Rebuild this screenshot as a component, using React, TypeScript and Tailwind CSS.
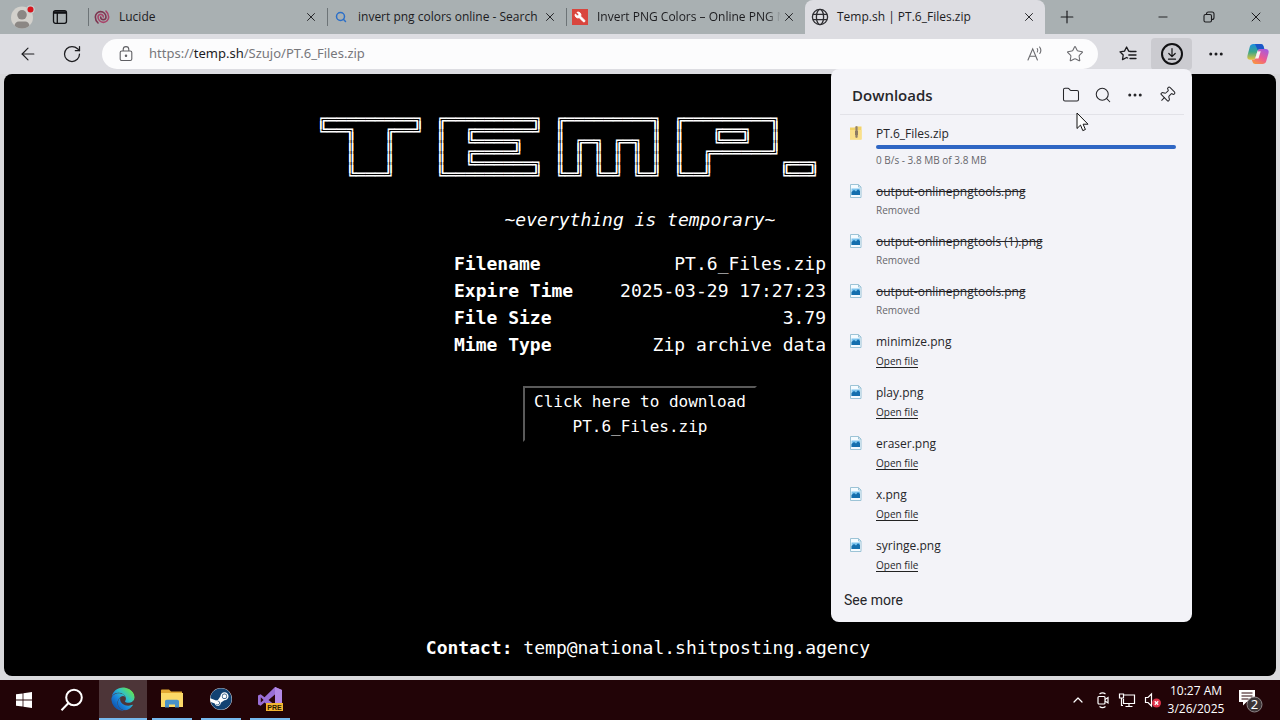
import React from "react";
import {
  ArrowLeft,
  RotateCw,
  Star,
  Folder,
  Search,
  Pin,
  Plus,
  X,
  Minus,
  Wrench,
  ChevronUp,
  Ellipsis,
} from "lucide-react";
import { FaEdge, FaSteam } from "react-icons/fa";

const letterT = [
  "╔═════════╗",
  "╚══╗   ╔══╝",
  "   ║   ║   ",
  "   ║   ║   ",
  "   ║   ║   ",
  "   ╚═══╝   ",
].join("\n");

const letterE = [
  "╔═════════╗",
  "║  ╔══════╝",
  "║  ╚════╗  ",
  "║  ╔════╝  ",
  "║  ╚══════╗",
  "╚═════════╝",
].join("\n");

const letterM = [
  "╔═════════╗",
  "║         ║",
  "║ ╔═╗ ╔═╗ ║",
  "║ ║ ║ ║ ║ ║",
  "║ ║ ║ ║ ║ ║",
  "╚═╝ ╚═╝ ╚═╝",
].join("\n");

const letterP = [
  "╔═════════╗    ",
  "║   ╔══╗  ║    ",
  "║   ╚══╝  ║    ",
  "║  ╔══════╝    ",
  "║  ║       ╔══╗",
  "╚══╝       ╚══╝",
].join("\n");

const banner = [letterT, letterE, letterM, letterP];

const fileInfo = [
  { label: "Filename", value: "PT.6_Files.zip" },
  { label: "Expire Time", value: "2025-03-29 17:27:23" },
  { label: "File Size", value: "3.79" },
  { label: "Mime Type", value: "Zip archive data" },
];

type Download = { name: string; state: "removed" | "done" };

const downloads: Download[] = [
  { name: "output-onlinepngtools.png", state: "removed" },
  { name: "output-onlinepngtools (1).png", state: "removed" },
  { name: "output-onlinepngtools.png", state: "removed" },
  { name: "minimize.png", state: "done" },
  { name: "play.png", state: "done" },
  { name: "eraser.png", state: "done" },
  { name: "x.png", state: "done" },
  { name: "syringe.png", state: "done" },
];

function LucideMark() {
  return (
    <svg viewBox="0 0 24 24" className="size-4" fill="none" strokeWidth="2.4" strokeLinecap="round">
      <path stroke="#a8446a" d="M14 12a4 4 0 0 0-8 0 8 8 0 1 0 16 0 11.97 11.97 0 0 0-4-8.944" />
      <path stroke="#7d3550" d="M10 12a4 4 0 0 0 8 0 8 8 0 1 0-16 0 11.97 11.97 0 0 0 4.063 9" />
    </svg>
  );
}

function WrenchMark() {
  return (
    <span className="flex size-4 items-center justify-center bg-[#d9453d]">
      <Wrench className="size-3 -scale-x-100 text-white" fill="white" strokeWidth={1.5} />
    </span>
  );
}

function GlobeMark() {
  return (
    <svg viewBox="0 0 18 18" className="size-[18px]" fill="none" stroke="#2c2c30" strokeWidth="1.3">
      <circle cx="9" cy="9" r="7.6" />
      <ellipse cx="9" cy="9" rx="3.6" ry="7.6" />
      <path d="M2 6.3h14M2 11.7h14" />
    </svg>
  );
}

function ProfileMark() {
  return (
    <svg viewBox="0 0 24 24" className="size-6">
      <defs>
        <clipPath id="avatar">
          <circle cx="11" cy="12.5" r="11" />
        </clipPath>
      </defs>
      <circle cx="11" cy="12.5" r="11" fill="#d3d1cc" />
      <g clipPath="url(#avatar)" fill="#8b8784">
        <circle cx="11" cy="9.8" r="4.8" />
        <path d="M3.6 24v-3.4c0-2.500 2-4.200 4.200-4.200h6.400c2.300 0 4.200 1.700 4.200 4.200V24z" />
      </g>
      <circle cx="19.500" cy="4.500" r="4.300" fill="#c9cccc" />
      <circle cx="19.500" cy="4.500" r="3" fill="#d8141c" />
    </svg>
  );
}

function TabActionsMark() {
  return (
    <svg viewBox="0 0 16 16" className="size-4" fill="none" stroke="#101114" strokeWidth="1.300">
      <rect x="1.500" y="1.700" width="13" height="12.600" rx="2" />
      <path d="M2 3.500h12" strokeWidth="2.600" />
      <path d="M5.300 4v10" />
    </svg>
  );
}

function LockMark() {
  return (
    <svg viewBox="0 0 16 18" className="h-[18px] w-4" fill="none" stroke="#5f5f63" strokeWidth="1.100">
      <rect x="2.200" y="6" width="11.600" height="9.500" rx="1.600" />
      <path d="M5.200 6V4.400a2.800 2.800 0 0 1 5.600 0V6" />
      <circle cx="8" cy="10.700" r="0.700" fill="#5f5f63" />
    </svg>
  );
}

function ReadAloudMark() {
  return (
    <svg viewBox="0 0 18 18" className="size-[18px]" fill="none" stroke="#6a6a6e" strokeWidth="1.100" strokeLinecap="round">
      <path d="M2 15 6.700 3.800 11.400 15M3.700 11.300h6" />
      <path d="M11.200 3.500c.8 1.100.8 2.500.1 3.500M13.600 2c1.500 2 1.500 4.600.2 6.500" />
    </svg>
  );
}

function FavoritesMark() {
  return (
    <svg viewBox="0 0 18 18" className="size-[18px]" fill="none" stroke="#1b1b1e" strokeWidth="1.300" strokeLinecap="round" strokeLinejoin="round">
      <path d="M11 6.300 9.700 6.100 7.600 2 5.500 6.100 1 6.800l3.200 3.200-.7 4.600 4.100-2.100 1 .5" />
      <path d="M11 6.500h6M9.800 10h7.200M11 13.500h6" />
    </svg>
  );
}

function DownloadMark() {
  return (
    <svg viewBox="0 0 24 24" className="size-6" fill="none" stroke="#111113" strokeLinecap="round" strokeLinejoin="round">
      <circle cx="12" cy="12" r="10" strokeWidth="2" />
      <path strokeWidth="1.200" d="M12 6.500v8M8.800 11.500l3.200 3.200 3.200-3.200M8.500 17.200h7" />
    </svg>
  );
}

function CopilotMark() {
  return (
    <svg viewBox="0 0 24 24" className="size-6">
      <defs>
        <linearGradient id="cpLeft" x1="0" y1="0" x2="0" y2="1">
          <stop offset="0" stopColor="#1b8fe0" />
          <stop offset="0.500" stopColor="#3aa68a" />
          <stop offset="1" stopColor="#e8c53a" />
        </linearGradient>
        <linearGradient id="cpRight" x1="0.800" y1="0" x2="0.200" y2="1">
          <stop offset="0" stopColor="#a45be0" />
          <stop offset="0.550" stopColor="#ee5a8f" />
          <stop offset="1" stopColor="#f9953f" />
        </linearGradient>
      </defs>
      <path d="M7.500 2h7.300c1.300 0 2.200.8 2.600 2l.9 3H14c-1.300 0-2.200.8-2.600 2l-2 6.800c-.4 1.300-1.300 2-2.600 2H4.500C1.800 17.800.8 16 1.500 13.400l2.300-8.600C4.300 3 5.600 2 7.500 2z" fill="url(#cpLeft)" />
      <path d="M16.500 22H9.200c-1.300 0-2.200-.8-2.600-2l-.8-2.200h1.400c1.300 0 2.200-.8 2.600-2l2.200-7c.4-1.200 1.100-1.800 2.400-1.800h5.100c2.700 0 3.700 1.800 3 4.300l-2.300 7.900c-.5 1.800-1.800 2.800-3.700 2.800z" fill="url(#cpRight)" />
      <path d="M9 2h5.800c1.300 0 2.200.8 2.600 2l.9 3H14c-1 0-1.700.4-2.200 1.200z" fill="#1c56c8" />
      <path d="M11.400 9.500 9.200 16.500l3.300-.1 2.200-7.200z" fill="#f7f1f2" />
    </svg>
  );
}

function ZipMark() {
  return (
    <svg viewBox="0 0 16 16" className="size-4">
      <path d="M2 2.500h4.500L8 1.500h5.500v13H2z" fill="#f3d367" />
      <path d="M2 5h11.500v9.500H2z" fill="#fae08a" />
      <path d="M7 1.500h3v11H7z" fill="#b5a078" />
      <path d="M8.500 1.500v11" stroke="#6f6350" strokeWidth="1" strokeDasharray="1 1" />
      <rect x="7" y="6" width="3" height="4" fill="#8d7b62" />
    </svg>
  );
}

function PictureMark() {
  return (
    <svg viewBox="0 0 16 16" className="size-4">
      <path d="M2.500 1.500h8l2.500 2.500v10.500H2.500z" fill="#f5fbff" stroke="#9cc3d6" strokeWidth="1" />
      <path d="M10.500 1.500V4H13" fill="none" stroke="#9cc3d6" />
      <rect x="3.500" y="5.500" width="8.500" height="6.500" fill="#7cc4ee" />
      <path d="M3.500 12V9l2.500-2 2 1.500 2-2.300 2 1.800V12z" fill="#156fae" />
    </svg>
  );
}

function CursorMark() {
  return (
    <svg viewBox="0 0 13 20" className="h-5 w-[13px]">
      <path d="M1 1v15.500l3.500-3.400 2.300 5.500 2.600-1.100-2.300-5.300H12z" fill="#fff" stroke="#111" strokeWidth="1" />
    </svg>
  );
}

function WindowsMark() {
  return (
    <svg viewBox="0 0 16 16" className="size-4" fill="#fff">
      <path d="M0 2.300 6.600 1.400v6.200H0zM7.400 1.300 16 0v7.600H7.400zM0 8.400h6.600v6.200L0 13.700zM7.400 8.400H16V16l-8.600-1.300z" />
    </svg>
  );
}

function TaskSearchMark() {
  return (
    <svg viewBox="0 0 24 24" className="size-6" fill="none" stroke="#fff" strokeWidth="2">
      <circle cx="14" cy="9.500" r="7.800" />
      <path d="M8.500 15 1.500 22.300" />
    </svg>
  );
}

function EdgeMark() {
  return (
    <span className="relative flex">
      <svg className="absolute size-0" aria-hidden="true">
        <defs>
          <linearGradient id="edge" x1="0.900" y1="0.200" x2="0.200" y2="0.900">
            <stop offset="0" stopColor="#5fe05a" />
            <stop offset="0.350" stopColor="#2fc0c8" />
            <stop offset="0.650" stopColor="#1b86dc" />
            <stop offset="1" stopColor="#0f57b0" />
          </linearGradient>
        </defs>
      </svg>
      <FaEdge className="size-6 rounded-full" fill="url(#edge)" />
    </span>
  );
}

function ExplorerMark() {
  return (
    <svg viewBox="0 0 24 22" className="h-[22px] w-6">
      <path d="M1 2.500C1 2 1.400 1.500 2 1.500h7l2 2h11v5H1z" fill="#e2a832" />
      <path d="M1 5h22v14H1z" fill="#fbd968" />
      <path d="M5 19.500v-6c0-1 .7-1.800 1.800-1.800h10.400c1.100 0 1.800.8 1.800 1.800v6h-4v-3H9v3z" fill="#4a92c9" />
    </svg>
  );
}

function SteamMark() {
  return (
    <span className="flex rounded-full bg-white">
      <FaSteam className="size-[22px]" color="#124272" />
    </span>
  );
}

function VisualStudioMark() {
  return (
    <svg viewBox="0 0 26 24" className="h-6 w-[26px]">
      <path d="M18 0 7.500 10.300 3.600 7.300 1 8.500v9l2.600 1.200L7.500 15.600 18 24l7-3V3z" fill="#9a6fd6" />
      <path d="M3.800 10.300v5.300L6.600 13zM18.500 7l-7 6 7 5.500z" fill="#2a0508" />
      <path d="M18 0l7 3v18l-7 3z" fill="#b48ae6" />
      <rect x="9" y="16" width="17" height="8" fill="#f2b632" />
      <text x="17.500" y="22.700" textAnchor="middle" fontSize="7" fontWeight="700" fontFamily="Liberation Sans, sans-serif" fill="#2b1a00">
        PRE
      </text>
    </svg>
  );
}

function MeetMark() {
  return (
    <svg viewBox="0 0 14 18" className="h-[18px] w-3.5" fill="none" stroke="#fff" strokeWidth="1.200">
      <rect x="2" y="5.500" width="7" height="7.500" rx="1" />
      <path d="M9 8.500 12 6.500v5.500L9 10M3.500 3c1.800-1.300 4.200-1.300 6 0M3.500 15.500c1.800 1.300 4.200 1.300 6 0" />
    </svg>
  );
}

function NetworkMark() {
  return (
    <svg viewBox="0 0 18 16" className="h-4 w-[18px]" fill="none" stroke="#fff" strokeWidth="1.200">
      <path d="M6 3h10.500v8.500h-11V7" />
      <path d="M1.500 2h4v4h-4zM3.500 6v7.500h1.500M11 11.500v2.500M7.500 14.500h7" />
    </svg>
  );
}

function MutedMark() {
  return (
    <svg viewBox="0 0 18 16" className="h-4 w-[18px]">
      <path d="M1.500 5.500h2.500L7.500 2v12L4 10.500H1.500z" fill="none" stroke="#fff" strokeWidth="1.200" />
      <circle cx="12.500" cy="11" r="4.500" fill="#e0324a" />
      <path d="m10.800 9.300 3.400 3.400m0-3.400-3.400 3.400" stroke="#fff" strokeWidth="1.300" />
    </svg>
  );
}

function NotificationMark() {
  return (
    <svg viewBox="0 0 26 26" className="size-[26px]">
      <path d="M2 3h16v12H9.500L6 18.500V15H2z" fill="#fff" />
      <path d="M4.500 6h11M4.500 9h11M4.500 12h7" stroke="#2a0508" strokeWidth="1.200" />
      <circle cx="17.500" cy="17.500" r="7.500" fill="#3b3436" stroke="#8d8587" strokeWidth="1" />
      <text x="17.500" y="22" textAnchor="middle" fontSize="13" fontFamily="Noto Sans, sans-serif" fill="#fff">
        2
      </text>
    </svg>
  );
}

function Tab({ icon, title, active, fade }: { icon: React.ReactNode; title: string; active?: boolean; fade?: boolean }) {
  return (
    <div
      role="tab"
      aria-selected={!!active}
      className={
        active
          ? "flex h-[34px] w-60 shrink items-center rounded-t-lg bg-[#dddde2] pr-2 pl-1.5"
          : "flex h-[34px] w-[239px] shrink items-center pr-2"
      }
    >
      {!active && <span className="h-[18px] w-px bg-[#6d7477]" />}
      <span className={active ? "flex w-[18px] justify-center" : "ml-1 flex w-[18px] justify-center"}>{icon}</span>
      <span
        className={
          fade
            ? "ml-2 min-w-0 flex-1 text-xs whitespace-nowrap [mask-image:linear-gradient(to_right,black_92%,transparent)]"
            : "ml-2 min-w-0 flex-1 text-xs whitespace-nowrap"
        }
      >
        {title}
      </span>
      <button aria-label={`Close ${title}`} className="flex size-4 shrink-0 items-center justify-center">
        <X className="size-3.5" strokeWidth={1.6} />
      </button>
    </div>
  );
}

function DownloadRow({ name, state }: Download) {
  return (
    <li className="flex gap-3 pt-2.5 pb-1">
      <span>
        <PictureMark />
      </span>
      <div className="flex flex-col items-start">
        {state === "removed" ? (
          <>
            <span className="text-xs leading-[18px] line-through">{name}</span>
            <span className="text-[10px] leading-[18px] text-[#66666b]">Removed</span>
          </>
        ) : (
          <>
            <span className="text-xs leading-[18px]">{name}</span>
            <a href="#open" className="mt-1 mb-0.5 border-b border-[#222] text-[10px] leading-3">
              Open file
            </a>
          </>
        )}
      </div>
    </li>
  );
}

function DownloadsPanel() {
  return (
    <section
      aria-label="Downloads"
      className="absolute top-[69px] right-[88px] w-[361px] rounded-lg bg-[#f3f3f8] pr-2 pl-[9px] text-[#26262a] shadow-md"
    >
      <header className="flex h-[46px] items-center border-b border-[#e2e2e8] pt-1.5 pr-2 pl-3">
        <h2 className="flex-1 text-[15px] leading-6 font-semibold">Downloads</h2>
        <div className="flex items-center gap-3.5">
          <button aria-label="Open downloads folder">
            <Folder className="size-[18px]" strokeWidth={1.4} />
          </button>
          <button aria-label="Search downloads">
            <Search className="size-[18px]" strokeWidth={1.4} />
          </button>
          <button aria-label="More options">
            <Ellipsis className="size-[18px]" strokeWidth={2} />
          </button>
          <button aria-label="Pin downloads">
            <Pin className="size-[18px] rotate-45" strokeWidth={1.4} />
          </button>
        </div>
      </header>
      <ul className="px-2">
        <li className="flex gap-3 pt-2.5 pb-1">
          <span>
            <ZipMark />
          </span>
          <div className="flex flex-1 flex-col">
            <span className="text-xs leading-[18px]">PT.6_Files.zip</span>
            <div role="progressbar" aria-label="PT.6_Files.zip" className="my-0.5 h-1 rounded-full bg-[#2f66c4]" />
            <span className="text-[10px] leading-[18px] text-[#66666b]">0 B/s - 3.8 MB of 3.8 MB</span>
          </div>
        </li>
        {downloads.map((d, i) => (
          <DownloadRow key={i} {...d} />
        ))}
      </ul>
      <button className="mt-1 mb-1 ml-1 flex h-9 items-center font-['Roboto',sans-serif] text-sm">See more</button>
    </section>
  );
}

export default function App() {
  return (
    <div className="relative flex min-h-screen flex-col bg-[#d9d9dc] font-['Open_Sans','Noto_Sans',sans-serif] text-[#1c1c1f]">
      <div className="flex h-[34px] items-center bg-[#a9b0b2]">
        <button aria-label="Profile" className="ml-[11px] flex">
          <ProfileMark />
        </button>
        <button aria-label="Tab actions" className="mr-5 ml-[17px] flex">
          <TabActionsMark />
        </button>
        <div role="tablist" className="flex min-w-0 pr-3">
          <Tab icon={<LucideMark />} title="Lucide" />
          <Tab icon={<Search className="size-3 text-[#2b6fc8]" strokeWidth={3} />} title="invert png colors online - Search" />
          <Tab icon={<WrenchMark />} title="Invert PNG Colors – Online PNG M" fade />
          <Tab icon={<GlobeMark />} title="Temp.sh | PT.6_Files.zip" active />
        </div>
        <button aria-label="New tab" className="flex">
          <Plus className="size-5" strokeWidth={1.4} />
        </button>
        <div className="ml-auto flex items-center gap-8 pr-4">
          <button aria-label="Minimize window">
            <Minus className="size-3.5" strokeWidth={1.6} />
          </button>
          <button aria-label="Restore window">
            <svg viewBox="0 0 14 14" className="size-3.5" fill="none" stroke="#1c1c1f" strokeWidth="1.100">
              <rect x="2" y="4.500" width="7.500" height="7.500" rx="1.500" />
              <path d="M4.500 4.500V4A2 2 0 0 1 6.500 2H10a2 2 0 0 1 2 2v3.500a2 2 0 0 1-2 2h-.5" />
            </svg>
          </button>
          <button aria-label="Close window">
            <X className="size-4" strokeWidth={1.5} />
          </button>
        </div>
      </div>

      <div className="flex h-10 items-center bg-[#dddde2] pr-2.5 pl-[18px]">
        <button aria-label="Back">
          <ArrowLeft className="size-5" strokeWidth={1.4} />
        </button>
        <button aria-label="Refresh" className="ml-6">
          <RotateCw className="size-5" strokeWidth={1.5} />
        </button>
        <div className="ml-5 flex h-[30px] min-w-0 flex-1 items-center rounded-full bg-[#fcfcfd] pr-3.5 pl-4">
          <LockMark />
          <a href="#address" className="ml-[15px] flex-1 truncate font-['Noto_Sans',sans-serif] text-[13px] text-[#77777b]">
            https://<span className="text-[#1c1c1f]">temp.sh</span>/Szujo/PT.6_Files.zip
          </a>
          <button aria-label="Read aloud" className="mr-[22px]">
            <ReadAloudMark />
          </button>
          <button aria-label="Add to favorites">
            <Star className="size-[18px] text-[#6a6a6e]" strokeWidth={1.4} />
          </button>
        </div>
        <button aria-label="Favorites" className="ml-[21px]">
          <FavoritesMark />
        </button>
        <button aria-label="Downloads" className="ml-3.5 flex h-8 w-[41px] items-center justify-center rounded bg-[#cbcbd0]">
          <DownloadMark />
        </button>
        <button aria-label="Settings and more" className="ml-[15px]">
          <Ellipsis className="size-[18px]" strokeWidth={2} />
        </button>
        <button aria-label="Copilot" className="ml-[21px]">
          <CopilotMark />
        </button>
      </div>

      <main className="mx-1 mb-1 flex flex-1 flex-col items-center rounded-lg bg-black pt-10 pb-[14px] font-['DejaVu_Sans_Mono','Liberation_Mono',monospace] text-lg leading-7 text-white">
        <h1 aria-label="TEMP." className="mr-36 flex gap-[13px] text-base leading-[11px]">
          {banner.map((art, i) => (
            <pre key={i} className="font-['DejaVu_Sans_Mono',monospace] leading-[11px]">
              {art}
            </pre>
          ))}
        </h1>
        <p className="mt-[26px] italic">~everything is temporary~</p>
        <table className="mt-4 w-[372px]">
          <tbody>
            {fileInfo.map((row) => (
              <tr key={row.label}>
                <th scope="row" className="p-0 text-left leading-[27px] font-bold">
                  {row.label}
                </th>
                <td className="p-0 text-right leading-[27px]">{row.value}</td>
              </tr>
            ))}
          </tbody>
        </table>
        <button className="mt-7 w-[234px] border-2 border-t-[#5a5a5a] border-r-black border-b-black border-l-[#5a5a5a] bg-black py-px text-base leading-[25px]">
          Click here to download PT.6_Files.zip
        </button>
        <p className="mt-auto ml-4">
          <b>Contact:</b> temp@national.shitposting.agency
        </p>
      </main>

      <footer className="flex h-10 items-center bg-[#220407] text-white">
        <button aria-label="Start" className="flex h-full w-12 items-center justify-center">
          <WindowsMark />
        </button>
        <button aria-label="Search" className="mr-[3px] flex h-full w-12 items-center justify-center">
          <TaskSearchMark />
        </button>
        <button aria-label="Microsoft Edge" className="flex h-full w-12 items-center justify-center border-b-2 border-[#76b9ed] bg-[#4d3538]">
          <EdgeMark />
        </button>
        <div className="ml-[5px] flex h-full gap-[9px]">
          <button aria-label="File Explorer" className="flex w-10 items-center justify-center border-b-2 border-[#76b9ed]">
            <ExplorerMark />
          </button>
          <button aria-label="Steam" className="flex w-10 items-center justify-center border-b-2 border-[#76b9ed]">
            <SteamMark />
          </button>
          <button aria-label="Visual Studio Preview" className="flex w-10 items-center justify-center border-b-2 border-[#76b9ed]">
            <VisualStudioMark />
          </button>
        </div>
        <div className="ml-auto flex items-center gap-2">
          <ChevronUp className="size-4" strokeWidth={1.8} />
          <span className="ml-0.5">
            <MeetMark />
          </span>
          <NetworkMark />
          <MutedMark />
        </div>
        <div className="ml-[7px] flex w-[54px] flex-col items-center text-xs leading-[18px] whitespace-nowrap">
          <span>10:27 AM</span>
          <span>3/26/2025</span>
        </div>
        <button aria-label="Notifications" className="mr-[17px] ml-3.5">
          <NotificationMark />
        </button>
      </footer>

      <DownloadsPanel />
      <span className="absolute top-[112px] right-[191px]">
        <CursorMark />
      </span>
    </div>
  );
}
